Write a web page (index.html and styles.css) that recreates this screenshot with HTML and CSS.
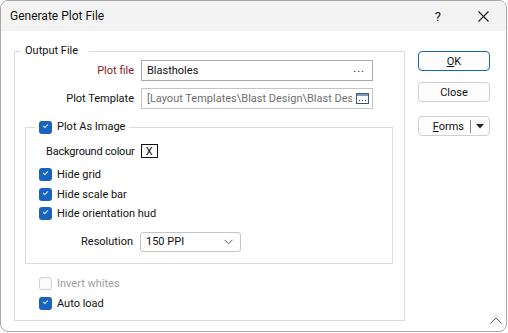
FILE: index.html
```html
<!DOCTYPE html>
<html lang="en">
<head>
  <meta charset="UTF-8" />
  <title>Generate Plot File</title>
  <link rel="stylesheet" href="styles.css">
</head>
<body>
  <div class="window">
    <div class="titlebar">
      <span class="title">Generate Plot File</span>
      <span class="help">?</span>
      <svg class="close-x" width="11" height="11" viewBox="0 0 11 11">
        <path d="M0.5 0.5 L10.5 10.5 M10.5 0.5 L0.5 10.5" stroke="#1a1a1a" stroke-width="1.1" fill="none"/>
      </svg>
    </div>

    <div class="content">
      <fieldset class="group outer">
        <legend class="group-title">Output File</legend>

        <div class="field-row">
          <label class="field-label required">Plot file</label>
          <div class="input">
            <span class="input-text">Blastholes</span>
            <span class="dots">...</span>
          </div>
        </div>
        <div class="field-row second">
          <label class="field-label">Plot Template</label>
          <div class="input muted">
            <span class="input-text">[Layout Templates\Blast Design\Blast Design</span>
            <svg class="browse" width="13" height="11" viewBox="0 0 13 11">
              <rect x="0.5" y="0.5" width="12" height="10" fill="#fff" stroke="#3c5a7a"/>
              <rect x="1" y="1" width="11" height="2" fill="#7f9bb8"/>
              <rect x="3" y="7" width="1" height="1" fill="#333"/>
              <rect x="6" y="7" width="1" height="1" fill="#333"/>
              <rect x="9" y="7" width="1" height="1" fill="#333"/>
            </svg>
          </div>
        </div>

        <fieldset class="group inner">
          <legend class="check-legend">
            <span class="check on"></span>
            <span>Plot As Image</span>
          </legend>

          <div class="colour-row">
            <span class="colour-label">Background colour</span>
            <span class="colour-box">X</span>
          </div>

          <div class="check-row first"><span class="check on"></span><span>Hide grid</span></div>
          <div class="check-row"><span class="check on"></span><span>Hide scale bar</span></div>
          <div class="check-row"><span class="check on"></span><span>Hide orientation hud</span></div>

          <div class="field-row resolution">
            <label class="field-label">Resolution</label>
            <div class="select">
              <span>150 PPI</span>
              <svg width="9" height="6" viewBox="0 0 9 6">
                <path d="M0.5 0.8 L4.5 4.8 L8.5 0.8" stroke="#555" stroke-width="1" fill="none"/>
              </svg>
            </div>
          </div>
        </fieldset>

        <div class="check-row disabled after"><span class="check off"></span><span>Invert whites</span></div>
        <div class="check-row"><span class="check on"></span><span>Auto load</span></div>
      </fieldset>

      <div class="actions">
        <button class="btn primary"><u>O</u>K</button>
        <button class="btn">Close</button>
        <div class="btn split">
          <span class="split-label"><u>F</u>orms</span>
          <span class="split-sep"></span>
          <svg width="8" height="5" viewBox="0 0 8 5"><path d="M0 0 H8 L4 4.5 Z" fill="#222"/></svg>
        </div>
      </div>
    </div>

    <svg class="grip" width="12" height="7" viewBox="0 0 12 7">
      <path d="M0.5 6.5 L6 1 L11.5 6.5" stroke="#555" stroke-width="1" fill="none"/>
    </svg>
  </div>
</body>
</html>
```

FILE: styles.css
```css
* { margin: 0; padding: 0; box-sizing: border-box; }
body {
  background: #fff;
  font-family: Roboto, 'Noto Sans', sans-serif;
  font-size: 11px;
  color: #111;
}
.window {
  position: relative;
  width: 507px;
  height: 332px;
  border: 1px solid #a8a8a8;
  border-radius: 8px;
  overflow: hidden;
  background: #fff;
  display: flex;
  flex-direction: column;
}
.titlebar {
  height: 30px;
  background: #f3f3f3;
  display: flex;
  align-items: center;
  padding-left: 9px;
  flex-shrink: 0;
}
.title { font-size: 12px; flex: 1; }
.help { font-size: 13px; margin-right: 37px; }
.close-x { margin-right: 17px; }

.content {
  display: flex;
  padding: 12px 0 0 13px;
  flex: 1;
}

/* group boxes */
.group {
  border: 1px solid #dcdcdc;
}
.outer {
  width: 391px;
  height: 278px;
  padding: 1px 0 0 0;
}
.group-title {
  margin-left: 6px;
  padding: 0 11px 0 4px;
  line-height: 16px;
}
.inner {
  margin: 10px 0 0 10px;
  width: 368px;
  height: 145px;
  padding: 0;
}
.check-legend {
  margin-left: 10px;
  padding: 0 4px 0 3px;
  display: flex;
  align-items: center;
  gap: 5px;
  line-height: 16px;
}

/* text fields */
.field-row {
  display: flex;
  align-items: center;
  gap: 7px;
  height: 21px;
}
.field-row.second { margin-top: 7px; }
.field-label {
  width: 119px;
  text-align: right;
}
.required { color: #8b1a1a; }
.input {
  width: 232px;
  height: 21px;
  border: 1px solid #a9a9a9;
  display: flex;
  align-items: center;
  padding: 0 5px;
  gap: 4px;
  overflow: hidden;
}
.input-text { flex: 1; white-space: nowrap; overflow: hidden; }
.input.muted { border-color: #c4c4c4; color: #707070; padding-right: 3px; }
.dots { letter-spacing: 1px; padding-bottom: 4px; margin-right: 2px; }
.browse { flex-shrink: 0; }

/* checkboxes */
.check {
  width: 13px;
  height: 13px;
  border-radius: 3px;
  display: inline-block;
  flex-shrink: 0;
  position: relative;
}
.check.on { background: #1763bd; }
.check.on::after {
  content: '';
  position: absolute;
  left: 4px;
  top: 3px;
  width: 4px;
  height: 2px;
  border-left: 1px solid #dce8f7;
  border-bottom: 1px solid #dce8f7;
  transform: rotate(-45deg);
}
.check.off { border: 1px solid #cfcfcf; background: #fbfbfb; }
.check-row {
  display: flex;
  align-items: center;
  gap: 5px;
  height: 19.5px;
  padding-left: 13px;
}
.outer > .check-row { padding-left: 24px; }
.check-row.first { margin-top: 7px; }
.check-row.disabled { color: #a0a0a0; }
.check-row.after { margin-top: 10px; }

.colour-row {
  display: flex;
  align-items: center;
  gap: 6px;
  padding-left: 20px;
  margin-top: 9px;
  height: 14px;
}
.colour-label { letter-spacing: -0.2px; white-space: nowrap; }
.colour-box {
  width: 17px;
  height: 14px;
  border: 1px solid #111;
  display: flex;
  align-items: center;
  justify-content: center;
  font-size: 11px;
}

.resolution { margin-top: 8px; height: 20px; }
.resolution .field-label { width: 107px; }
.select {
  width: 101px;
  height: 20px;
  border: 1px solid #c4c4c4;
  border-radius: 3px;
  display: flex;
  align-items: center;
  justify-content: space-between;
  padding: 0 7px 0 5px;
}

/* buttons */
.actions {
  margin-left: 13px;
  display: flex;
  flex-direction: column;
  width: 72px;
}
.btn {
  height: 20px;
  width: 72px;
  border: 1px solid #d0d0d0;
  border-radius: 4px;
  background: #fdfdfd;
  font: inherit;
  color: #111;
  display: flex;
  align-items: center;
  justify-content: center;
}
.btn.primary { border-color: #1763bd; margin-top: 8px; }
.btn + .btn { margin-top: 11px; }
.btn.split { margin-top: 14px; justify-content: flex-end; padding-right: 5px; }
.split-label { margin-right: 6px; }
.split-sep { width: 1px; height: 13px; background: #8a8a8a; margin-right: 5px; }

.grip {
  position: absolute;
  right: 4px;
  bottom: 7px;
}
```
